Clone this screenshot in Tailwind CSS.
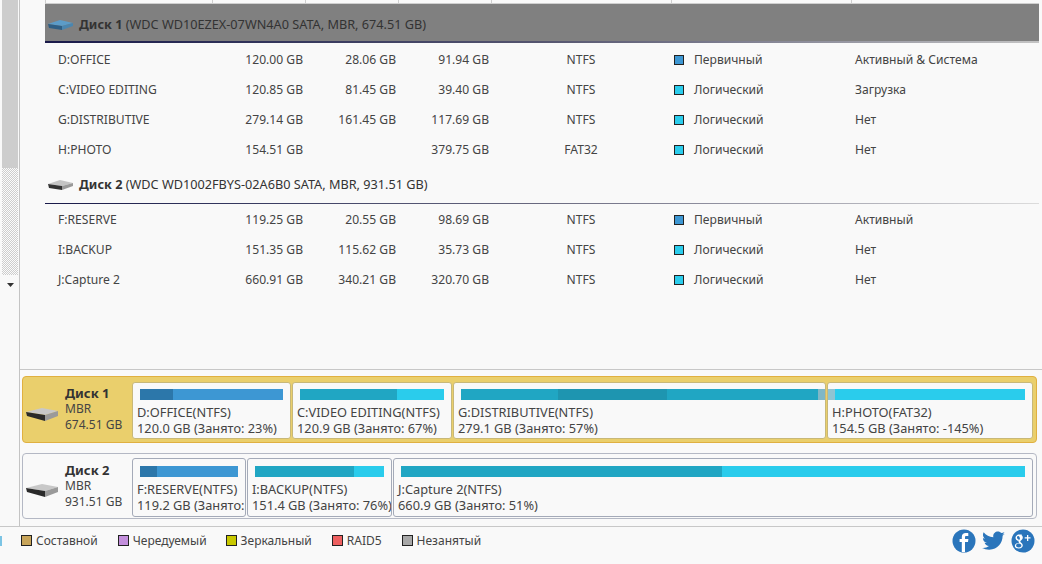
<!DOCTYPE html>
<html>
<head>
<meta charset="utf-8">
<script src="https://cdn.jsdelivr.net/npm/@tailwindcss/browser@4"></script>
</head>
<body class="m-0 bg-[#f9f9f9]">
<div class="w-[1042px] h-[564px] overflow-hidden flex flex-col bg-[#f9f9f9] text-[#444] text-[12px] font-['Noto_Sans','Liberation_Sans',sans-serif]">
  <div class="h-[527px] flex border-b border-[#c8c8c8]">
    <!-- scrollbar -->
    <div class="w-[20px] shrink-0 border-r border-[#c4c4c4] pl-[2px] flex flex-col">
      <div class="w-[16px] h-[168px] bg-[#cdcdcd]"></div>
      <div class="w-[16px] h-[107px] bg-[repeating-conic-gradient(#cdcdcd_0_25%,#fbfbfb_0_50%)] bg-[length:2px_2px]"></div>
      <div class="w-[16px] h-[18px] flex items-center justify-center pt-[2px]">
        <svg width="7" height="4" viewBox="0 0 7 4"><path d="M0 0h7L3.500 4z" fill="#333"/></svg>
      </div>
    </div>
    <div class="flex-1 flex flex-col min-w-0">
      <div class="h-[369px] flex flex-col">
        <div class="h-[4px] ml-[25px] mr-[3px] border-b border-[#cfcfcf] grid grid-cols-[167px_93px_93px_93px_180px_180px_1fr]">
          <div class="border-l border-[#cfcfcf]"></div><div class="border-l border-[#cfcfcf]"></div><div class="border-l border-[#cfcfcf]"></div><div class="border-l border-[#cfcfcf]"></div><div class="border-l border-[#cfcfcf]"></div><div class="border-l border-[#cfcfcf]"></div><div class="border-l border-[#cfcfcf]"></div>
        </div>
        <div class="ml-[25px] mr-[3px]">
          <!-- Disk 1 header -->
          <div class="h-[37px] bg-[#808080] flex items-center pl-[3px] pt-[5px] gap-[6px] text-[#333] text-[12.7px]">
            <svg width="25" height="10" viewBox="0 0 25 10"><path d="M0 4L12 0l13 3-11 3z" fill="#5c9cc8"/><path d="M0 4l14 2v4L1 8z" fill="#2f5f85"/><path d="M14 6l11-3v3l-11 4z" fill="#4a86b0"/></svg>
            <div><span class="font-bold">Диск 1</span> (WDC WD10EZEX-07WN4A0 SATA, MBR, 674.51 GB)</div>
          </div>
          <div class="h-[2px] bg-gradient-to-r from-[#1a1a4a] via-[#55556f] to-[#c4c4c4]"></div>
          <div class="h-[2px]"></div>
          <div class="grid grid-cols-[167px_93px_93px_93px_180px_180px_1fr] auto-rows-[30px] items-center text-[12.1px]">
            <div class="pl-[13px]">D:OFFICE</div><div class="text-right pr-[2px]">120.00 GB</div><div class="text-right pr-[2px]">28.06 GB</div><div class="text-right pr-[2px]">91.94 GB</div><div class="text-center">NTFS</div>
            <div class="pl-[3px] flex items-center gap-[10px]"><span class="w-[10px] h-[10px] border border-[#222] bg-[#3d97d3]"></span>Первичный</div><div class="pl-[4px]">Активный &amp; Система</div>
            <div class="pl-[13px]">C:VIDEO EDITING</div><div class="text-right pr-[2px]">120.85 GB</div><div class="text-right pr-[2px]">81.45 GB</div><div class="text-right pr-[2px]">39.40 GB</div><div class="text-center">NTFS</div>
            <div class="pl-[3px] flex items-center gap-[10px]"><span class="w-[10px] h-[10px] border border-[#222] bg-[#2accec]"></span>Логический</div><div class="pl-[4px]">Загрузка</div>
            <div class="pl-[13px]">G:DISTRIBUTIVE</div><div class="text-right pr-[2px]">279.14 GB</div><div class="text-right pr-[2px]">161.45 GB</div><div class="text-right pr-[2px]">117.69 GB</div><div class="text-center">NTFS</div>
            <div class="pl-[3px] flex items-center gap-[10px]"><span class="w-[10px] h-[10px] border border-[#222] bg-[#2accec]"></span>Логический</div><div class="pl-[4px]">Нет</div>
            <div class="pl-[13px]">H:PHOTO</div><div class="text-right pr-[2px]">154.51 GB</div><div></div><div class="text-right pr-[2px]">379.75 GB</div><div class="text-center">FAT32</div>
            <div class="pl-[3px] flex items-center gap-[10px]"><span class="w-[10px] h-[10px] border border-[#222] bg-[#2accec]"></span>Логический</div><div class="pl-[4px]">Нет</div>
          </div>
          <!-- Disk 2 header -->
          <div class="h-[38px] flex items-center pl-[3px] pt-[1px] gap-[6px] text-[#333] text-[12.7px]">
            <svg width="25" height="10" viewBox="0 0 25 10"><path d="M0 4L12 0l13 3-11 3z" fill="#c4c4c4"/><path d="M0 4l14 2v4L1 8z" fill="#333"/><path d="M14 6l11-3v3l-11 4z" fill="#999"/></svg>
            <div><span class="font-bold">Диск 2</span> (WDC WD1002FBYS-02A6B0 SATA, MBR, 931.51 GB)</div>
          </div>
          <div class="h-[1px] bg-gradient-to-r from-[#1a1a4a] via-[#6a6a80] to-[#dcdcdc]"></div>
          <div class="grid grid-cols-[167px_93px_93px_93px_180px_180px_1fr] auto-rows-[30px] items-center mt-[1px] text-[12.1px]">
            <div class="pl-[13px]">F:RESERVE</div><div class="text-right pr-[2px]">119.25 GB</div><div class="text-right pr-[2px]">20.55 GB</div><div class="text-right pr-[2px]">98.69 GB</div><div class="text-center">NTFS</div>
            <div class="pl-[3px] flex items-center gap-[10px]"><span class="w-[10px] h-[10px] border border-[#222] bg-[#3d97d3]"></span>Первичный</div><div class="pl-[4px]">Активный</div>
            <div class="pl-[13px]">I:BACKUP</div><div class="text-right pr-[2px]">151.35 GB</div><div class="text-right pr-[2px]">115.62 GB</div><div class="text-right pr-[2px]">35.73 GB</div><div class="text-center">NTFS</div>
            <div class="pl-[3px] flex items-center gap-[10px]"><span class="w-[10px] h-[10px] border border-[#222] bg-[#2accec]"></span>Логический</div><div class="pl-[4px]">Нет</div>
            <div class="pl-[13px]">J:Capture 2</div><div class="text-right pr-[2px]">660.91 GB</div><div class="text-right pr-[2px]">340.21 GB</div><div class="text-right pr-[2px]">320.70 GB</div><div class="text-center">NTFS</div>
            <div class="pl-[3px] flex items-center gap-[10px]"><span class="w-[10px] h-[10px] border border-[#222] bg-[#2accec]"></span>Логический</div><div class="pl-[4px]">Нет</div>
          </div>
        </div>
      </div>
      <!-- Disk maps -->
      <div class="h-[157px] border-t border-[#c8c8c8] flex flex-col pl-[2px] pr-[5px] pt-[6px] gap-[10px]">
        <div class="h-[67px] rounded-[4px] bg-[#eacf6c] border border-[#e0b040] flex pl-[3px] pr-[3px]">
          <div class="w-[106px] shrink-0 h-full flex items-center gap-[7px]">
            <svg class="mt-[9px]" width="32" height="13" viewBox="0 0 32 13"><path d="M0 4L16 0l16 3-13 4z" fill="#c8c8c8"/><path d="M0 4l19 3v6L1 8z" fill="#2a2a2a"/><path d="M19 7l13-4v5l-13 5z" fill="#9a9a9a"/></svg>
            <div class="leading-[16px] pb-[1px]"><div class="font-bold text-[#333] text-[13px]">Диск 1</div><div>MBR</div><div>674.51 GB</div></div>
          </div>
          <div class="flex-1 flex gap-[1px] h-[57px] mt-[5px] text-[12.8px]">
            <div class="w-[159px] rounded-[3px] border border-[#c8b878] bg-[#f9f9f9] pt-[6px] px-[4px] leading-[16px] whitespace-nowrap overflow-hidden">
              <div class="mx-[3px] h-[11px] bg-[#3d97d3] flex mb-[4px]"><div class="w-[33px] bg-[#2c77aa]"></div></div>D:OFFICE(NTFS)<br>120.0 GB (Занято: 23%)
            </div>
            <div class="w-[160px] rounded-[3px] border border-[#c8b878] bg-[#f9f9f9] pt-[6px] px-[4px] leading-[16px] whitespace-nowrap overflow-hidden">
              <div class="mx-[3px] h-[11px] bg-[#2accec] flex mb-[4px]"><div class="w-[97px] bg-[#20a6c3]"></div></div>C:VIDEO EDITING(NTFS)<br>120.9 GB (Занято: 67%)
            </div>
            <div class="w-[373px] rounded-[3px] border border-[#c8b878] bg-[#f9f9f9] pt-[6px] px-[4px] leading-[16px] whitespace-nowrap overflow-hidden">
              <div class="ml-[3px] h-[11px] bg-[#20a6c3] flex mb-[4px] w-[365px]"><div class="ml-[97px] w-[109px] bg-[#1e95b0]"></div><div class="ml-auto w-[8px] bg-[#7fb7c6]"></div></div>G:DISTRIBUTIVE(NTFS)<br>279.1 GB (Занято: 57%)
            </div>
            <div class="flex-1 rounded-[3px] border border-[#c8b878] bg-[#f9f9f9] pt-[6px] px-[4px] leading-[16px] whitespace-nowrap overflow-hidden">
              <div class="h-[11px] bg-[#2accec] ml-[-4px] mr-[3px] flex mb-[4px]"><div class="w-[7px] bg-[#8fc4d2]"></div></div>H:PHOTO(FAT32)<br>154.5 GB (Занято: -145%)
            </div>
          </div>
        </div>
        <div class="h-[66px] rounded-[4px] border border-[#b4b8c4] flex pl-[3px] pr-[3px]">
          <div class="w-[106px] shrink-0 h-full flex items-center gap-[7px]">
            <svg class="mt-[9px]" width="32" height="13" viewBox="0 0 32 13"><path d="M0 4L16 0l16 3-13 4z" fill="#c8c8c8"/><path d="M0 4l19 3v6L1 8z" fill="#2a2a2a"/><path d="M19 7l13-4v5l-13 5z" fill="#9a9a9a"/></svg>
            <div class="leading-[16px]"><div class="font-bold text-[#333] text-[13px]">Диск 2</div><div>MBR</div><div>931.51 GB</div></div>
          </div>
          <div class="flex-1 flex gap-[1px] h-[59px] mt-[4px] text-[12.8px]">
            <div class="w-[114px] rounded-[3px] border border-[#a4aab8] pt-[7px] px-[4px] leading-[16px] whitespace-nowrap overflow-hidden">
              <div class="mx-[3px] h-[11px] bg-[#3d97d3] flex mb-[4px]"><div class="w-[17px] bg-[#2c77aa]"></div></div>F:RESERVE(NTFS)<br>119.2 GB (Занято:
            </div>
            <div class="w-[145px] rounded-[3px] border border-[#a4aab8] pt-[7px] px-[4px] leading-[16px] whitespace-nowrap overflow-hidden">
              <div class="mx-[3px] h-[11px] bg-[#2accec] flex mb-[4px]"><div class="w-[99px] bg-[#20a6c3]"></div></div>I:BACKUP(NTFS)<br>151.4 GB (Занято: 76%)
            </div>
            <div class="flex-1 rounded-[3px] border border-[#a4aab8] pt-[7px] px-[4px] leading-[16px] whitespace-nowrap overflow-hidden">
              <div class="mx-[3px] h-[11px] bg-[#2accec] flex mb-[4px]"><div class="w-[321px] bg-[#20a6c3]"></div></div>J:Capture 2(NTFS)<br>660.9 GB (Занято: 51%)
            </div>
          </div>
        </div>
      </div>
    </div>
  </div>
  <!-- Legend -->
  <div class="flex-1 flex items-center justify-between pr-[7px] pb-[10px]">
    <div class="flex items-center">
      <span class="w-[2px] h-[10px] bg-[#7cc4e4] mr-[19px]"></span>
      <span class="w-[11px] h-[11px] border border-[#222] bg-[#c8a55a] mr-[4px]"></span><span class="mr-[20px]">Составной</span>
      <span class="w-[11px] h-[11px] border border-[#222] bg-[#c38fdc] mr-[4px]"></span><span class="mr-[19px]">Чередуемый</span>
      <span class="w-[11px] h-[11px] border border-[#222] bg-[#c8c800] mr-[4px]"></span><span class="mr-[20px]">Зеркальный</span>
      <span class="w-[11px] h-[11px] border border-[#222] bg-[#ee6060] mr-[4px]"></span><span class="mr-[20px]">RAID5</span>
      <span class="w-[11px] h-[11px] border border-[#222] bg-[#a8a8a8] mr-[4px]"></span><span>Незанятый</span>
    </div>
    <div class="flex items-center gap-[6px]">
      <svg width="24" height="24" viewBox="0 0 24 24"><circle cx="12" cy="12" r="11.500" fill="#2a75bb"/><path d="M13 23v-10h3l.4-3H13V8.300c0-.9.3-1.400 1.500-1.400h1.800V4.200c-.4 0-1.400-.1-2.500-.1-2.500 0-4 1.500-4 4.100V10H7.600v3h2.200v10z" fill="#fff"/></svg>
      <svg width="23" height="20" viewBox="0 0 24 20"><path d="M24 2.400c-.9.4-1.800.7-2.800.8 1-.6 1.800-1.600 2.200-2.700-1 .6-2 1-3.100 1.200C19.300.7 18 0 16.600 0c-2.700 0-4.900 2.200-4.900 4.900 0 .4 0 .8.100 1.100C7.700 5.800 4.100 3.900 1.700.9c-.4.700-.7 1.600-.7 2.500 0 1.700.9 3.200 2.200 4.100-.8 0-1.600-.2-2.200-.6v.1c0 2.400 1.700 4.400 3.900 4.800-.4.100-.8.200-1.300.2-.3 0-.6 0-.9-.1.600 2 2.400 3.400 4.600 3.400-1.700 1.300-3.800 2.100-6.100 2.100-.4 0-.8 0-1.200-.1C2.200 18.200 4.800 19 7.500 19c9.100 0 14-7.500 14-14v-.6c1-.7 1.800-1.600 2.500-2z" fill="#2a75bb"/></svg>
      <svg width="24" height="24" viewBox="0 0 24 24"><circle cx="12" cy="12" r="11.500" fill="#2a75bb"/><path d="M11 5.500H8c-2 0-3.500 1.500-3.500 3.200 0 1.800 1.400 3 3.200 3-.6 1 0 1.600.4 2.200-2 0-4.300 1-4.300 3 0 1.700 2 2.600 4 2.600 2.600 0 4-1.500 4-3 0-2.400-2.500-2.800-2.500-4 0-1 2.500-1.500 2.500-4 0-1.200-.6-2-1.300-2.500zM7 7c1.200-.3 2.300 2 1.800 3.200C8 11.500 6.200 10 6 8.800 5.800 8 6.300 7.200 7 7zm.8 7.400c1.700 0 2.600 1 2.600 2.200 0 1-.8 1.900-2.500 1.900-1.600 0-2.800-.8-2.800-2 0-1.300 1.300-2.100 2.700-2.100z" fill="#fff"/><path d="M16 6h1.300v2.300h2.200v1.300h-2.200V12H16V9.600h-2.300V8.300H16z" fill="#fff"/></svg>
    </div>
  </div>
</div>
</body>
</html>
